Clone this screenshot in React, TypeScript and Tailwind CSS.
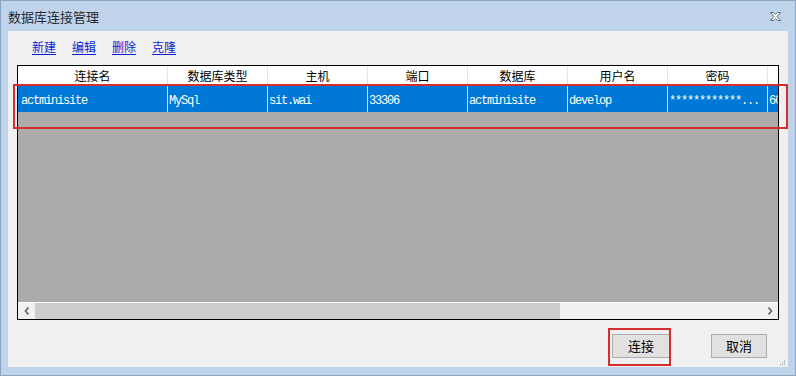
import React from 'react';

const COLUMNS = [
    { label: '连接名', width: 'w-[150px]' },
    { label: '数据库类型', width: 'w-[100px]' },
    { label: '主机', width: 'w-[100px]' },
    { label: '端口', width: 'w-[100px]' },
    { label: '数据库', width: 'w-[100px]' },
    { label: '用户名', width: 'w-[100px]' },
    { label: '密码', width: 'w-[100px]' },
    { label: '', width: 'w-[60px]' },
];

const ROW = ['actminisite', 'MySql', 'sit.wai', '33306', 'actminisite', 'develop', '************...', '6000'];

const LINKS = ['新建', '编辑', '删除', '克隆'];

function CloseIcon() {
    return (
        <svg width="13" height="11" viewBox="0 0 13 11">
            <path
                d="M1.5 1.5h3l2 2 2-2h3l-3.5 4 3.5 4h-3l-2-2-2 2h-3l3.5-4z"
                fill="#ffffff"
                stroke="#5b6b80"
                strokeWidth="1"
                strokeLinejoin="round"
            />
        </svg>
    );
}

function Chevron({ dir }: { dir: 'left' | 'right' }) {
    return (
        <svg width="6" height="8" viewBox="0 0 6 8">
            <path
                d={dir === 'left' ? 'M4.5 0.5 1.5 4l3 3.5' : 'M1.5 0.5 4.5 4l-3 3.5'}
                fill="none"
                stroke="#606060"
                strokeWidth="1.6"
            />
        </svg>
    );
}

export default function App() {
    const cjk = "font-['Noto_Sans_CJK_SC','Noto_Sans',sans-serif]";
    const mono = "font-['Liberation_Mono','Noto_Sans_CJK_SC',monospace]";

    return (
        <div className="relative flex h-[376px] w-[796px] flex-col overflow-hidden border border-[#8aa4c4] bg-[#bfd3ea]">
            {/* title bar */}
            <div className="flex h-[30px] shrink-0 items-center justify-between pl-[7px] pr-[13px]">
                <span className={`${cjk} text-[13px] leading-none text-[#2a2a2a]`}>数据库连接管理</span>
                <CloseIcon />
            </div>

            {/* client area */}
            <div className="mx-[7px] mb-[8px] flex flex-1 flex-col bg-[#f0f0f0]">
                <div className={`${cjk} flex h-[34px] items-center gap-[16px] pb-[2px] pl-[24px] text-[12px] text-[#0a1fcf]`}>
                    {LINKS.map((l) => (
                        <span key={l} className="underline underline-offset-2">
                            {l}
                        </span>
                    ))}
                </div>

                <div className="ml-[9px] flex h-[255px] w-[762px] flex-col overflow-hidden border border-black bg-[#ababab]">
                    <div className={`${cjk} flex h-[20px] shrink-0 bg-white text-[12px] text-black`}>
                        {COLUMNS.map((c, i) => (
                            <div
                                key={i}
                                className={`${c.width} flex shrink-0 items-center justify-center border-r border-[#e5e5e5]`}
                            >
                                {c.label}
                            </div>
                        ))}
                    </div>
                    <div className={`${mono} flex h-[26px] shrink-0 bg-[#0078d7] text-[12px] tracking-[-1.2px] text-white`}>
                        {COLUMNS.map((c, i) => (
                            <div
                                key={i}
                                className={`${c.width} flex shrink-0 items-center overflow-hidden whitespace-nowrap border-r border-[#cfe3f5] pt-[3px] ${i === 0 ? 'pl-[3px]' : 'pl-[1px]'}`}
                            >
                                {ROW[i]}
                            </div>
                        ))}
                    </div>
                    <div className="flex-1" />
                    <div className="flex h-[17px] shrink-0 border-t border-white bg-[#f0f0f0]">
                        <div className="flex w-[17px] items-center justify-center">
                            <Chevron dir="left" />
                        </div>
                        <div className="w-[525px] bg-[#cdcdcd]" />
                        <div className="flex-1" />
                        <div className="flex w-[17px] items-center justify-center">
                            <Chevron dir="right" />
                        </div>
                    </div>
                </div>

                <div className={`${cjk} mt-[14px] flex justify-end gap-[41px] pr-[21px] text-[13px] text-black`}>
                    <button className="flex h-[24px] w-[58px] items-center justify-center border border-[#adadad] bg-[#e1e1e1]">
                        连接
                    </button>
                    <button className="flex h-[24px] w-[56px] items-center justify-center border border-[#adadad] bg-[#e1e1e1]">
                        取消
                    </button>
                </div>
            </div>

            {/* resize grip */}
            <div className="absolute bottom-[10px] right-[10px] grid grid-cols-3 gap-[1px]">
                {[0, 0, 1, 0, 1, 1, 1, 1, 1].map((v, i) => (
                    <div key={i} className={`h-[1px] w-[1px] ${v ? 'bg-[#a0a0a0]' : ''}`} />
                ))}
            </div>

            {/* red annotation boxes */}
            <div className="absolute left-[12px] top-[83px] h-[45px] w-[775px] border-2 border-[#d32f2f]" />
            <div className="absolute left-[607px] top-[327px] h-[38px] w-[63px] border-2 border-[#d32f2f]" />
        </div>
    );
}
